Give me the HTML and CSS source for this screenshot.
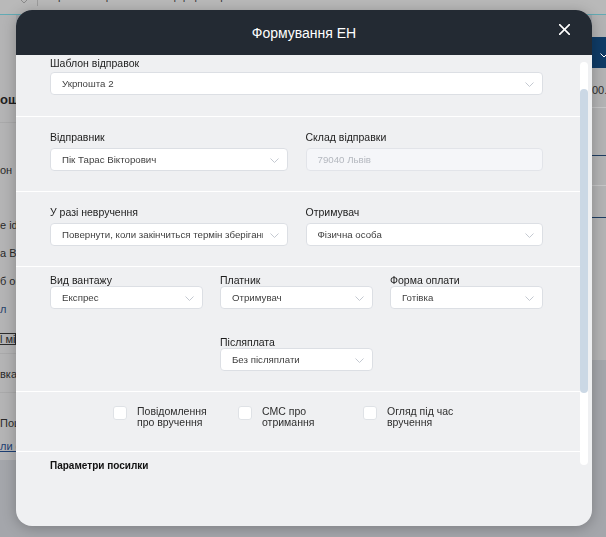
FILE: index.html
```html
<!DOCTYPE html>
<html lang="uk">
<head>
<meta charset="utf-8">
<title>Формування ЕН</title>
<link rel="stylesheet" href="styles.css">
</head>
<body>
<div class="page">
  <header class="topbar">
    <svg class="tb-chev" width="8" height="5" viewBox="0 0 8 5"><path d="M0.5 0.5 L4 4 L7.5 0.5" fill="none" stroke="#8a8a8a" stroke-width="1"/></svg>
    <span class="tb-sep"></span>
    <span class="tb-item">Проект: Хорошоп</span>
    <span class="tb-item tb-item-2">Оффер: Хорошоп</span>
  </header>
  <div class="page-main">
    <aside class="strip-left">
      <div class="ls-upper">
        <div class="ls-title">ошоп</div>
        <div class="ls-rule ls-r1"></div>
        <div class="ls-t ls-t1">он</div>
        <div class="ls-t ls-t2">e id</div>
        <div class="ls-t ls-t3">а Ве</div>
        <div class="ls-t ls-t3">б оп</div>
        <div class="ls-t ls-t3 ls-blue">л</div>
        <div class="ls-box">l міт</div>
        <div class="ls-rule ls-r2"></div>
        <div class="ls-t ls-t4">вка</div>
        <div class="ls-rule ls-r3"></div>
        <div class="ls-t ls-t5">Пош</div>
        <div class="ls-t ls-t6 ls-link">ли о</div>
      </div>
    </aside>
    <div class="page-center"></div>
    <aside class="strip-right">
      <div class="rs-upper">
        <div class="rs-gap"></div>
        <div class="rs-bar"><svg width="8" height="5" viewBox="0 0 8 5"><path d="M0.5 0.5 L4 4 L7.5 0.5" fill="none" stroke="#fff" stroke-width="1"/></svg></div>
        <div class="rs-amount">00.0</div>
        <div class="rs-row rs-row1"></div>
        <div class="rs-row rs-row2"></div>
        <div class="rs-row rs-row3"></div>
      </div>
    </aside>
  </div>
</div>

<div class="modal">
  <div class="modal-head">
    <span></span>
    <h1 class="modal-title">Формування ЕН</h1>
    <button class="close" type="button" aria-label="Закрити"><svg width="11" height="11" viewBox="0 0 11 11"><path d="M0.6 0.6 L10.4 10.4 M10.4 0.6 L0.6 10.4" stroke="#fff" stroke-width="1.6" stroke-linecap="round"/></svg></button>
  </div>
  <div class="modal-body">
    <div class="scroll">
      <div class="scroll-inner">
        <section class="sec sec-first">
          <div class="lbl lbl-tight">Шаблон відправок</div>
          <div class="sel"><span class="sel-text">Укрпошта 2</span><svg class="chev" width="9" height="5" viewBox="0 0 9 5"><path d="M0.5 0.5 L4.5 4.5 L8.5 0.5" fill="none" stroke="#c4c9d1" stroke-width="1"/></svg></div>
        </section>

        <section class="sec">
          <div class="grid2">
            <div class="field">
              <div class="lbl">Відправник</div>
              <div class="sel"><span class="sel-text">Пік Тарас Вікторович</span><svg class="chev" width="9" height="5" viewBox="0 0 9 5"><path d="M0.5 0.5 L4.5 4.5 L8.5 0.5" fill="none" stroke="#c4c9d1" stroke-width="1"/></svg></div>
            </div>
            <div class="field">
              <div class="lbl">Склад відправки</div>
              <div class="sel sel-disabled"><span class="sel-text">79040 Львів</span></div>
            </div>
          </div>
        </section>

        <section class="sec">
          <div class="grid2">
            <div class="field">
              <div class="lbl">У разі невручення</div>
              <div class="sel"><span class="sel-text">Повернути, коли закінчиться термін зберігання</span><svg class="chev" width="9" height="5" viewBox="0 0 9 5"><path d="M0.5 0.5 L4.5 4.5 L8.5 0.5" fill="none" stroke="#c4c9d1" stroke-width="1"/></svg></div>
            </div>
            <div class="field">
              <div class="lbl">Отримувач</div>
              <div class="sel"><span class="sel-text">Фізична особа</span><svg class="chev" width="9" height="5" viewBox="0 0 9 5"><path d="M0.5 0.5 L4.5 4.5 L8.5 0.5" fill="none" stroke="#c4c9d1" stroke-width="1"/></svg></div>
            </div>
          </div>
        </section>

        <section class="sec sec-three">
          <div class="grid3">
            <div class="field">
              <div class="lbl lbl-compact">Вид вантажу</div>
              <div class="sel"><span class="sel-text">Експрес</span><svg class="chev" width="9" height="5" viewBox="0 0 9 5"><path d="M0.5 0.5 L4.5 4.5 L8.5 0.5" fill="none" stroke="#c4c9d1" stroke-width="1"/></svg></div>
            </div>
            <div class="field">
              <div class="lbl lbl-compact">Платник</div>
              <div class="sel"><span class="sel-text">Отримувач</span><svg class="chev" width="9" height="5" viewBox="0 0 9 5"><path d="M0.5 0.5 L4.5 4.5 L8.5 0.5" fill="none" stroke="#c4c9d1" stroke-width="1"/></svg></div>
            </div>
            <div class="field">
              <div class="lbl lbl-compact">Форма оплати</div>
              <div class="sel"><span class="sel-text">Готівка</span><svg class="chev" width="9" height="5" viewBox="0 0 9 5"><path d="M0.5 0.5 L4.5 4.5 L8.5 0.5" fill="none" stroke="#c4c9d1" stroke-width="1"/></svg></div>
            </div>
            <div class="field field-col2">
              <div class="lbl lbl-compact">Післяплата</div>
              <div class="sel"><span class="sel-text">Без післяплати</span><svg class="chev" width="9" height="5" viewBox="0 0 9 5"><path d="M0.5 0.5 L4.5 4.5 L8.5 0.5" fill="none" stroke="#c4c9d1" stroke-width="1"/></svg></div>
            </div>
          </div>
        </section>

        <section class="sec sec-checks">
          <div class="checks">
            <label class="check"><span class="box"></span><span class="check-text">Повідомлення<br>про вручення</span></label>
            <label class="check"><span class="box"></span><span class="check-text">СМС про<br>отримання</span></label>
            <label class="check"><span class="box"></span><span class="check-text">Огляд під час<br>вручення</span></label>
          </div>
        </section>

        <section class="sec sec-params">
          <div class="params-title">Параметри посилки</div>
          <div class="params-row">Габарити посилки</div>
        </section>
      </div>
    </div>
    <div class="scrollbar"><div class="thumb"></div></div>
  </div>
</div>
</body>
</html>
```
FILE: styles.css
```css
* { box-sizing: border-box; }

html, body {
  margin: 0;
  padding: 0;
}

body {
  width: 606px;
  height: 537px;
  overflow: hidden;
  background: #a4a6ab;
  font-family: "Liberation Sans", Arial, sans-serif;
}

/* ---------- dimmed page behind the modal ---------- */
.page {
  width: 606px;
  height: 537px;
  display: flex;
  flex-direction: column;
}

.topbar {
  height: 15px;
  flex: none;
  background: #b9b9b9;
  border-bottom: 1px solid #62aab4;
  display: flex;
  align-items: flex-start;
  padding-left: 20px;
  overflow: hidden;
  font-size: 11px;
  line-height: 13px;
  color: #3a3a3a;
}

.tb-chev { flex: none; margin-top: -1px; }
.tb-sep {
  flex: none;
  width: 1px;
  height: 6px;
  background: #9c9c9c;
  margin-left: 9px;
}
.tb-item { margin-left: 12px; margin-top: -10px; white-space: nowrap; }
.tb-item-2 { margin-left: 23px; }

.page-main {
  flex: 1;
  display: flex;
  background: #a4a6ab;
}

.strip-left {
  width: 16px;
  flex: none;
  overflow: hidden;
}

.ls-upper {
  height: 445px;
  background: #b4b4b5;
  font-size: 11px;
  line-height: 13px;
  color: #2a2a2a;
  white-space: nowrap;
}

.ls-title {
  padding-top: 77px;
  font-size: 13px;
  line-height: 16px;
  font-weight: bold;
  color: #1e1e1e;
}

.ls-rule { height: 1px; background: #a9a9aa; }
.ls-r1 { margin-top: 14px; }
.ls-r2 { margin-top: 8px; }
.ls-r3 { margin-top: 11px; }

.ls-t1 { margin-top: 41px; }
.ls-t2 { margin-top: 42px; }
.ls-t3 { margin-top: 15px; }
.ls-t4 { margin-top: 14px; }
.ls-t5 { margin-top: 24px; }
.ls-t6 { margin-top: 10px; }
.ls-blue { color: #28436b; }
.ls-link { color: #1d3f73; text-decoration: underline; }

.ls-box {
  margin-top: 17px;
  height: 12px;
  line-height: 10px;
  border: 1px solid #2c2c2c;
  border-left: none;
  padding-left: 0;
}

.page-center { flex: 1; }

.strip-right {
  width: 14px;
  flex: none;
  overflow: hidden;
}

.rs-upper {
  height: 345px;
  background: #b3b3b4;
}
.rs-gap { height: 22px; }
.rs-bar {
  height: 31px;
  background: #0f3b66;
  padding: 16px 0 0 8px;
  line-height: 0;
}
.rs-amount {
  height: 40px;
  padding-top: 16px;
  font-size: 11px;
  line-height: 13px;
  color: #2c2c2c;
  white-space: nowrap;
  border-bottom: 1px solid #c6c6c7;
}
.rs-row1 { height: 48px; border-bottom: 1px solid #1f3d62; }
.rs-row2 { height: 30px; border-bottom: 1px solid #c6c6c7; }
.rs-row3 { height: 32px; border-bottom: 1px solid #1f3d62; }

/* ---------- modal ---------- */
.modal {
  position: fixed;
  left: 16px;
  top: 10px;
  width: 576px;
  height: 516px;
  border-radius: 16px;
  background: #eff0f2;
  overflow: hidden;
  box-shadow: 0 2px 14px rgba(0, 0, 0, 0.25);
  display: flex;
  flex-direction: column;
}

.modal-head {
  height: 45px;
  flex: none;
  background: #232a33;
  display: grid;
  grid-template-columns: 1fr auto 1fr;
  align-items: center;
}

.modal-title {
  margin: 0;
  font-size: 14px;
  font-weight: normal;
  color: #fff;
  line-height: 16px;
}

.close {
  justify-self: end;
  margin: 0 22px 6px 0;
  padding: 0;
  border: 0;
  background: none;
  width: 11px;
  height: 11px;
  line-height: 0;
}

.modal-body {
  height: 419px;
  flex: none;
  display: flex;
}

.scroll {
  flex: 1;
  min-width: 0;
  overflow: hidden;
}

.scroll-inner { margin-top: -12px; }

.scrollbar {
  width: 8px;
  flex: none;
  margin: 7px 4px 9px 0;
  background: #fff;
  border-radius: 4px;
  padding-top: 27px;
}

.thumb {
  height: 304px;
  background: #cbd8e5;
  border-radius: 4px;
}

.sec {
  border-top: 1px solid #fff;
  padding: 14px 37px 20px 34px;
}

.sec-first {
  border-top: none;
  padding-bottom: 21px;
}

.lbl {
  font-size: 10.5px;
  line-height: 13px;
  color: #1c1c1c;
  margin-bottom: 4px;
  white-space: nowrap;
}

.lbl-tight { margin-bottom: 2px; }

.lbl-compact {
  line-height: 11px;
  margin-bottom: 0;
}

.field { min-width: 0; }

.sel {
  height: 23px;
  border: 1px solid #dcdfe4;
  border-radius: 4px;
  background: #fff;
  display: flex;
  align-items: center;
  padding: 0 8px 0 11px;
  font-size: 9.7px;
  color: #3e3e3e;
}

.sel-text {
  flex: 1;
  min-width: 0;
  overflow: hidden;
  white-space: nowrap;
}

.chev { flex: none; margin-left: 7px; margin-top: 1px; }

.sel-disabled {
  background: #f5f6f9;
  border-color: #e2e4e9;
  color: #b4b8bf;
}

.grid2 {
  display: grid;
  grid-template-columns: minmax(0, 1fr) minmax(0, 1fr);
  column-gap: 18px;
}

.sec-three { padding-top: 8px; }

.grid3 {
  display: grid;
  grid-template-columns: repeat(3, minmax(0, 1fr));
  column-gap: 17px;
  row-gap: 28px;
}

.field-col2 { grid-column: 2; }

.sec-checks { padding: 14px 37px 24px 97px; }

.checks { display: flex; }

.check {
  width: 125px;
  flex: none;
  display: flex;
  align-items: flex-start;
}

.box {
  width: 14px;
  height: 14px;
  flex: none;
  background: #fff;
  border: 1px solid #dfe2e6;
  border-radius: 3px;
}

.check-text {
  margin-left: 10px;
  font-size: 10.5px;
  line-height: 10.5px;
  color: #2e2e2e;
}

.sec-params { padding-top: 8px; }

.params-title {
  font-size: 10px;
  line-height: 12px;
  font-weight: bold;
  color: #111;
}

.params-row {
  margin-top: 2px;
  font-size: 10px;
  line-height: 12px;
  color: #9a9a9a;
}
```
